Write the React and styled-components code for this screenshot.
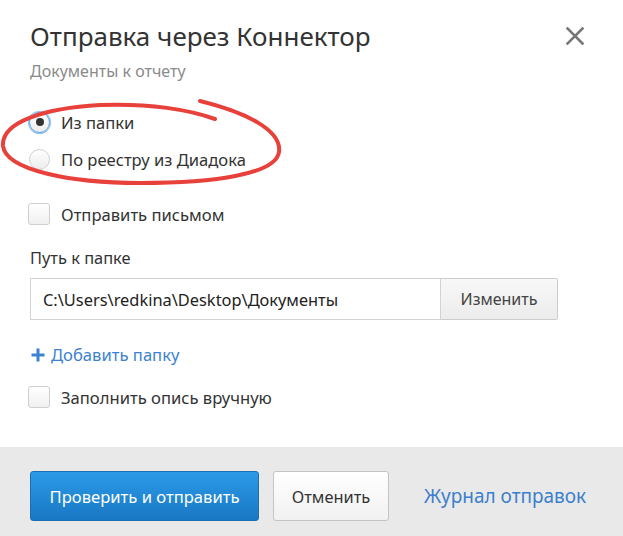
import React from 'react';
import styled, { createGlobalStyle } from 'styled-components';

const GlobalStyle = createGlobalStyle`
  html, body {
    margin: 0;
    padding: 0;
    background: #ffffff;
  }
  body {
    font-family: "Noto Sans", "Open Sans", sans-serif;
    color: #333333;
  }
`;

const Dialog = styled.div`
  position: relative;
  width: 623px;
  height: 536px;
  display: flex;
  flex-direction: column;
  background: #ffffff;
  overflow: hidden;
`;

const Content = styled.div`
  flex: 1;
  padding: 18px 30px 0 30px;
`;

const Header = styled.div`
  display: flex;
  justify-content: space-between;
  align-items: flex-start;
`;

const Title = styled.h1`
  margin: 0;
  font-weight: 400;
  font-size: 26px;
  line-height: 36px;
  color: #333333;
`;

const CloseButton = styled.button`
  border: 0;
  background: none;
  padding: 0;
  margin: 8px 8px 0 0;
  width: 20px;
  height: 20px;
  cursor: pointer;
  display: flex;
  align-items: center;
  justify-content: center;
`;

const Subtitle = styled.div`
  margin-top: 7px;
  font-size: 16px;
  line-height: 20px;
  color: #8a8a8a;
`;

const OptionGroup = styled.div`
  margin-top: 29px;
  display: flex;
  flex-direction: column;
  gap: 13px;
`;

const Option = styled.label`
  display: flex;
  align-items: center;
  gap: 11px;
  height: 24px;
  font-size: 16.6px;
  color: #333333;
  margin-top: ${({ $gap }) => $gap || 0}px;
`;

const RadioMark = styled.span`
  box-sizing: border-box;
  width: 21px;
  height: 21px;
  margin-left: -1px;
  border-radius: 50%;
  background: linear-gradient(#ffffff, #ececec);
  border: 1px solid ${({ $checked }) => ($checked ? '#5b9fe0' : '#d0d0d0')};
  box-shadow: ${({ $checked }) => ($checked ? '0 0 0 1px #8fc0ee' : 'none')};
  display: flex;
  align-items: center;
  justify-content: center;
  &::after {
    content: '';
    display: ${({ $checked }) => ($checked ? 'block' : 'none')};
    width: 8px;
    height: 8px;
    border-radius: 50%;
    background: #333333;
  }
`;

const CheckMark = styled.span`
  box-sizing: border-box;
  width: 22px;
  height: 22px;
  margin-left: -2px;
  border-radius: 3px;
  border: 1px solid #cfcfcf;
  background: linear-gradient(#ffffff, #f0f0f0);
`;

const FieldLabel = styled.div`
  margin-top: 20px;
  font-size: 16.4px;
  line-height: 24px;
`;

const PathRow = styled.div`
  margin-top: 8px;
  display: flex;
  height: 42px;
`;

const PathInput = styled.div`
  box-sizing: border-box;
  width: 411px;
  border: 1px solid #d3d3d3;
  padding: 0 12px;
  display: flex;
  align-items: center;
  font-size: 16.4px;
  color: #222222;
`;

const ChangeButton = styled.button`
  box-sizing: border-box;
  width: 117px;
  border: 1px solid #cccccc;
  border-left: 0;
  border-radius: 0 2px 2px 0;
  background: linear-gradient(#f8f8f8, #ececec);
  font-family: inherit;
  font-size: 16px;
  color: #444444;
  cursor: pointer;
`;

const AddLink = styled.a`
  margin-top: 22px;
  display: flex;
  align-items: center;
  gap: 6px;
  height: 24px;
  font-size: 16.6px;
  color: #3c82d0;
  text-decoration: none;
  cursor: pointer;
`;

const PlusIcon = styled.svg`
  width: 14px;
  height: 14px;
  margin-left: 1px;
  margin-top: 1px;
`;

const Footer = styled.div`
  height: 89px;
  box-sizing: border-box;
  background: #e9e9e9;
  padding: 24px 30px 0 30px;
  display: flex;
  align-items: flex-start;
  gap: 14px;
`;

const PrimaryButton = styled.button`
  box-sizing: border-box;
  height: 50px;
  width: 229px;
  border: 1px solid #1c6fb3;
  border-radius: 3px;
  background: linear-gradient(#2b9ae8, #1978c4);
  color: #ffffff;
  font-family: inherit;
  font-size: 16.6px;
  cursor: pointer;
`;

const SecondaryButton = styled.button`
  box-sizing: border-box;
  height: 50px;
  width: 116px;
  border: 1px solid #c4c4c4;
  border-radius: 3px;
  background: linear-gradient(#ffffff, #f1f1f1);
  color: #333333;
  font-family: inherit;
  font-size: 16.4px;
  cursor: pointer;
`;

const JournalLink = styled.a`
  margin-left: 21px;
  line-height: 50px;
  font-size: 19px;
  color: #3c7fcc;
  text-decoration: none;
  cursor: pointer;
`;

const Scribble = styled.svg`
  position: absolute;
  left: 0;
  top: 0;
  width: 300px;
  height: 200px;
  pointer-events: none;
`;

function Radio({ checked, children, gap }) {
  return (
    <Option $gap={gap}>
      <RadioMark $checked={checked} />
      {children}
    </Option>
  );
}

function Checkbox({ children, gap }) {
  return (
    <Option $gap={gap}>
      <CheckMark />
      {children}
    </Option>
  );
}

export default function App() {
  return (
    <>
      <GlobalStyle />
      <Dialog>
        <Content>
          <Header>
            <Title>Отправка через Коннектор</Title>
            <CloseButton aria-label="Закрыть">
              <svg width="18" height="18" viewBox="0 0 18 18">
                <path d="M1.5 1.5 L16.5 16.5 M16.5 1.5 L1.5 16.5" stroke="#777777" strokeWidth="2.6" strokeLinecap="square" />
              </svg>
            </CloseButton>
          </Header>
          <Subtitle>Документы к отчету</Subtitle>
          <OptionGroup>
            <Radio checked>Из папки</Radio>
            <Radio>По реестру из Диадока</Radio>
          </OptionGroup>
          <Checkbox gap={31}>Отправить письмом</Checkbox>
          <FieldLabel>Путь к папке</FieldLabel>
          <PathRow>
            <PathInput>C:\Users\redkina\Desktop\Документы</PathInput>
            <ChangeButton>Изменить</ChangeButton>
          </PathRow>
          <AddLink>
            <PlusIcon viewBox="0 0 14 14">
              <path d="M7 0.5 V13.5 M0.5 7 H13.5" stroke="#3c82d0" strokeWidth="3" />
            </PlusIcon>
            Добавить папку
          </AddLink>
          <Checkbox gap={19}>Заполнить опись вручную</Checkbox>
        </Content>
        <Footer>
          <PrimaryButton>Проверить и отправить</PrimaryButton>
          <SecondaryButton>Отменить</SecondaryButton>
          <JournalLink>Журнал отправок</JournalLink>
        </Footer>
        <Scribble viewBox="0 0 300 200">
          <path
            d="M200 101 C245 112, 282 130, 279 152 C276 174, 215 183, 140 183 C70 183, 6 170, 3 146 C1 122, 45 108, 100 105 C150 103, 190 110, 215 119"
            fill="none"
            stroke="#e8403b"
            strokeWidth="4"
            strokeLinecap="round"
          />
        </Scribble>
      </Dialog>
    </>
  );
}
